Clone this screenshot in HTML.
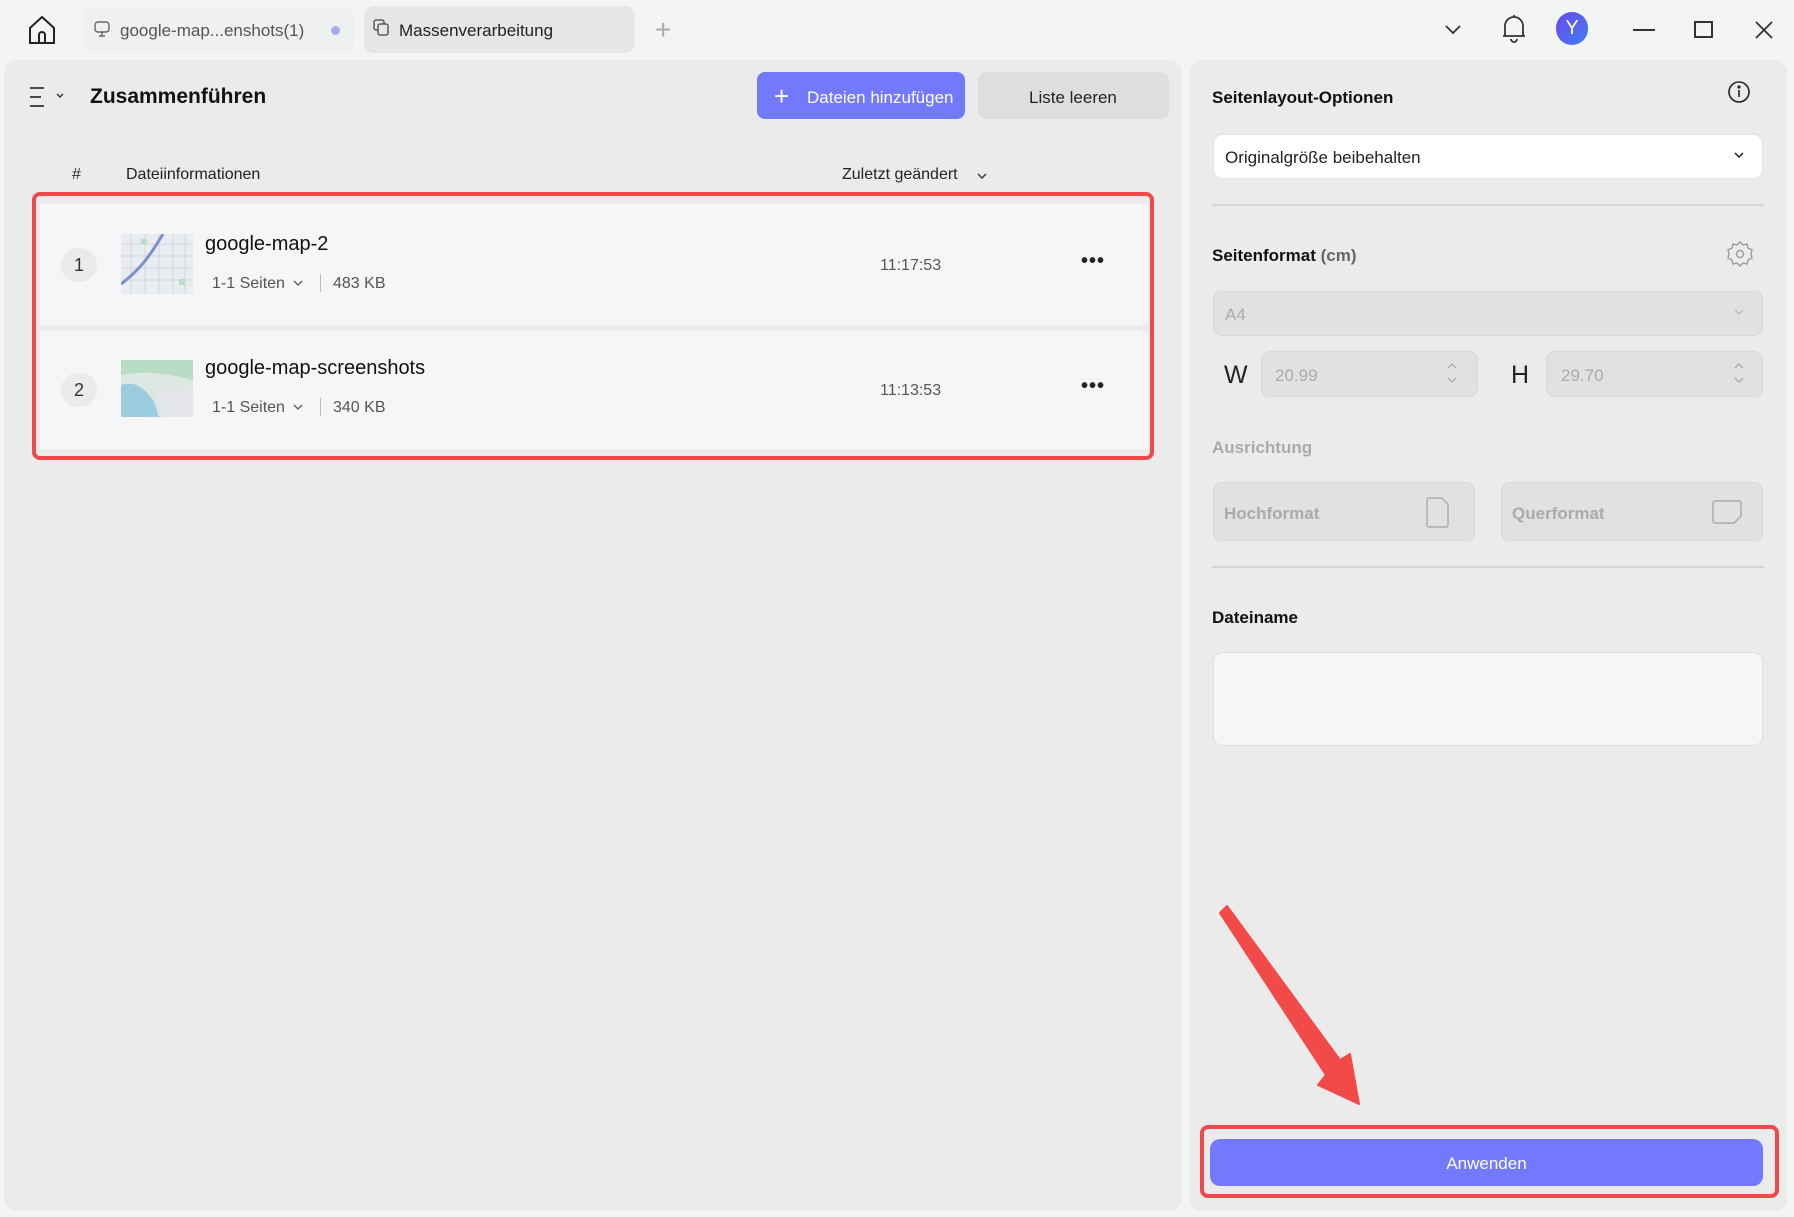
<!DOCTYPE html>
<html><head><meta charset="utf-8"><style>
*{box-sizing:border-box;margin:0;padding:0}
body{width:1794px;height:1217px;background:#f3f4f4;font-family:"Liberation Sans",sans-serif;position:relative;overflow:hidden;color:#1d1d1f}
.a{position:absolute}
.panel{position:absolute;background:#ebebec;border-radius:12px}
.t{position:absolute;white-space:nowrap}
.row{position:absolute;left:40px;width:1108px;background:#f6f6f8}
.badge{position:absolute;width:36px;height:34px;border-radius:17px;background:#ebebed;font-size:18px;text-align:center;line-height:34px;color:#333}
.sel{position:absolute;border-radius:9px}
</style></head><body>
<svg class="a" style="left:26px;top:14px" width="32" height="32" viewBox="0 0 32 32" fill="none" stroke="#222" stroke-width="2"><path d="M4 14 L16 3 L28 14 V29 H4 Z"/><path d="M13 29 V21 a3 3 0 0 1 6 0 V29"/></svg>
<div class="a" style="left:84px;top:7px;width:270px;height:46px;background:#eff0f0;border-radius:10px"></div>
<svg class="a" style="left:94px;top:21px" width="16" height="18" viewBox="0 0 16 18" fill="none" stroke="#666" stroke-width="1.4"><rect x="1" y="1" width="14" height="10" rx="3"/><path d="M8 11 V15 M5 15 H11"/></svg>
<div class="t" style="left:120px;top:21px;font-size:17px;color:#555">google-map...enshots(1)</div>
<div class="a" style="left:331px;top:26px;width:9px;height:9px;border-radius:5px;background:#a9acf5"></div>
<div class="a" style="left:364px;top:6px;width:271px;height:47px;background:#e6e6e8;border-radius:10px"></div>
<svg class="a" style="left:373px;top:19px" width="18" height="18" viewBox="0 0 18 18" fill="none" stroke="#444" stroke-width="1.3"><rect x="1" y="1" width="10" height="10" rx="2"/><rect x="5" y="5" width="10" height="11" rx="2" fill="#e6e6e8"/></svg>
<div class="t" style="left:399px;top:21px;font-size:17px;color:#222">Massenverarbeitung</div>
<div class="t" style="left:655px;top:14px;font-size:28px;color:#aaa;font-weight:300">+</div>
<svg class="a" style="left:1443px;top:22px" width="20" height="14" viewBox="0 0 20 14" fill="none" stroke="#333" stroke-width="1.8"><path d="M3 4 L10 11 L17 4"/></svg>
<svg class="a" style="left:1500px;top:13px" width="28" height="30" viewBox="0 0 28 30" fill="none" stroke="#333" stroke-width="1.8"><path d="M14 2 V4 M5 23 V13 a9 9 0 0 1 18 0 V23 H5 Z M3 23 H25"/><path d="M11 26 a3 3 0 0 0 6 0"/></svg>
<div class="a" style="left:1556px;top:12px;width:32px;height:33px;border-radius:17px;background:linear-gradient(135deg,#6a48f0,#3f7ef0);color:#fff;font-size:20px;text-align:center;line-height:33px">Y</div>
<div class="a" style="left:1633px;top:29px;width:22px;height:2px;background:#333"></div>
<div class="a" style="left:1694px;top:21px;width:19px;height:17px;border:2px solid #333"></div>
<svg class="a" style="left:1754px;top:20px" width="20" height="20" viewBox="0 0 20 20" stroke="#333" stroke-width="1.8"><path d="M2 2 L18 18 M18 2 L2 18"/></svg>

<div class="panel" style="left:4px;top:60px;width:1178px;height:1151px"></div>
<svg class="a" style="left:28px;top:85px" width="40" height="24" viewBox="0 0 40 24" fill="none" stroke="#333" stroke-width="1.8"><path d="M2 3 H16 M2 12 H13 M2 21 H16"/><path d="M29 9 L32 12 L35 9" stroke-width="1.4"/></svg>
<div class="t" style="left:90px;top:85px;font-size:21px;font-weight:bold;color:#111">Zusammenführen</div>
<div class="a" style="left:757px;top:72px;width:208px;height:47px;background:#7279fb;border-radius:8px"></div>
<div class="t" style="left:774px;top:81px;font-size:26px;color:#fff;font-weight:300">+</div>
<div class="t" style="left:807px;top:88px;font-size:17px;color:#fff">Dateien hinzufügen</div>
<div class="a" style="left:978px;top:72px;width:191px;height:47px;background:#dedee0;border-radius:9px"></div>
<div class="t" style="left:1029px;top:88px;font-size:17px;color:#222">Liste leeren</div>
<div class="t" style="left:72px;top:166px;font-size:16px;color:#333">#</div>
<div class="t" style="left:126px;top:166px;font-size:16px;color:#222">Dateiinformationen</div>
<div class="t" style="left:842px;top:166px;font-size:16px;color:#222">Zuletzt geändert</div>
<svg class="a" style="left:977px;top:172px" width="10" height="8" viewBox="0 0 10 8" fill="none" stroke="#333" stroke-width="1.4"><path d="M1 2 L5 6 L9 2"/></svg>

<div class="row" style="top:204px;height:121px"></div>
<div class="row" style="top:331px;height:118px"></div>
<div class="a" style="left:32px;top:192px;width:1122px;height:268px;border:4px solid #ef4a4a;border-radius:8px"></div>

<div class="badge" style="left:61px;top:248px">1</div>
<svg class="a" style="left:121px;top:234px" width="72" height="60" viewBox="0 0 72 60"><rect width="72" height="60" fill="#e9ecf0"/><g stroke="#d2d6dd" stroke-width="1"><path d="M0 10 H72 M0 22 H72 M0 34 H72 M0 46 H72 M10 0 V60 M24 0 V60 M38 0 V60 M52 0 V60 M64 0 V60"/></g><path d="M0 50 C20 35 30 20 42 0" stroke="#7b8fc9" stroke-width="3" fill="none"/><rect x="20" y="5" width="6" height="5" fill="#b9dcc4"/><rect x="58" y="45" width="6" height="6" fill="#b9dcc4"/></svg>
<div class="t" style="left:205px;top:233px;font-size:20px;color:#111">google-map-2</div>
<div class="t" style="left:212px;top:275px;font-size:16px;color:#555">1-1 Seiten</div>
<svg class="a" style="left:293px;top:279px" width="10" height="8" viewBox="0 0 10 8" fill="none" stroke="#555" stroke-width="1.3"><path d="M1 2 L5 6 L9 2"/></svg>
<div class="a" style="left:320px;top:274px;width:1px;height:18px;background:#bbb"></div>
<div class="t" style="left:333px;top:275px;font-size:16px;color:#555">483 KB</div>
<div class="t" style="left:880px;top:257px;font-size:16px;color:#555">11:17:53</div>
<div class="t" style="left:1081px;top:250px;font-size:20px;color:#222;letter-spacing:1px;font-weight:bold">•••</div>

<div class="badge" style="left:61px;top:373px">2</div>
<svg class="a" style="left:121px;top:360px" width="72" height="57" viewBox="0 0 72 57"><rect width="72" height="57" fill="#dfe7e3"/><path d="M0 0 H72 V20 C50 15 30 10 0 15 Z" fill="#b8dcc4"/><path d="M0 25 C15 20 25 30 32 40 C38 50 35 57 40 57 H0 Z" fill="#9cccdf"/><path d="M40 57 C45 50 40 40 34 30 C50 28 60 35 72 30 V57 Z" fill="#e4e6ea"/></svg>
<div class="t" style="left:205px;top:357px;font-size:20px;color:#111">google-map-screenshots</div>
<div class="t" style="left:212px;top:399px;font-size:16px;color:#555">1-1 Seiten</div>
<svg class="a" style="left:293px;top:403px" width="10" height="8" viewBox="0 0 10 8" fill="none" stroke="#555" stroke-width="1.3"><path d="M1 2 L5 6 L9 2"/></svg>
<div class="a" style="left:320px;top:398px;width:1px;height:18px;background:#bbb"></div>
<div class="t" style="left:333px;top:399px;font-size:16px;color:#555">340 KB</div>
<div class="t" style="left:880px;top:382px;font-size:16px;color:#555">11:13:53</div>
<div class="t" style="left:1081px;top:375px;font-size:20px;color:#222;letter-spacing:1px;font-weight:bold">•••</div>

<div class="panel" style="left:1190px;top:60px;width:597px;height:1151px"></div>
<div class="t" style="left:1212px;top:88px;font-size:17px;font-weight:bold;color:#111">Seitenlayout-Optionen</div>
<svg class="a" style="left:1727px;top:80px" width="24" height="24" viewBox="0 0 24 24" fill="none" stroke="#222" stroke-width="1.6"><circle cx="12" cy="12" r="10"/><path d="M12 10 V17"/><circle cx="12" cy="7" r="0.8" fill="#222"/></svg>
<div class="sel" style="left:1213px;top:134px;width:550px;height:45px;background:#fff;border:1px solid #e2e2e4"></div>
<div class="t" style="left:1225px;top:148px;font-size:17px;color:#222">Originalgröße beibehalten</div>
<svg class="a" style="left:1733px;top:151px" width="12" height="9" viewBox="0 0 12 9" fill="none" stroke="#333" stroke-width="1.6"><path d="M2 2 L6 6 L10 2"/></svg>
<div class="a" style="left:1212px;top:204px;width:552px;height:2px;background:#d6d6d8"></div>
<div class="t" style="left:1212px;top:246px;font-size:17px;font-weight:bold;color:#111">Seitenformat <span style="color:#666">(cm)</span></div>
<svg class="a" style="left:1726px;top:240px" width="28" height="28" viewBox="0 0 28 28" fill="none" stroke="#999" stroke-width="1.4"><path d="M14 2 l3 3 4-1 1 4 4 2-1 4 1 4-4 2-1 4-4-1-3 3-3-3-4 1-1-4-4-2 1-4-1-4 4-2 1-4 4 1z"/><circle cx="14" cy="14" r="3.5"/></svg>
<div class="sel" style="left:1213px;top:291px;width:550px;height:45px;background:#e1e1e3;border:1px solid #d8d8da"></div>
<div class="t" style="left:1225px;top:305px;font-size:17px;color:#aaa">A4</div>
<svg class="a" style="left:1733px;top:308px" width="12" height="9" viewBox="0 0 12 9" fill="none" stroke="#bbb" stroke-width="1.4"><path d="M2 2 L6 6 L10 2"/></svg>
<div class="t" style="left:1224px;top:361px;font-size:25px;color:#222">W</div>
<div class="sel" style="left:1261px;top:351px;width:217px;height:46px;background:#e1e1e3;border:1px solid #d8d8da"></div>
<div class="t" style="left:1275px;top:366px;font-size:17px;color:#aaa">20.99</div>
<svg class="a" style="left:1446px;top:361px" width="12" height="24" viewBox="0 0 12 24" fill="none" stroke="#aaa" stroke-width="1.3"><path d="M2 7 L6 3 L10 7 M2 17 L6 21 L10 17"/></svg>
<div class="t" style="left:1511px;top:361px;font-size:25px;color:#222">H</div>
<div class="sel" style="left:1546px;top:351px;width:217px;height:46px;background:#e1e1e3;border:1px solid #d8d8da"></div>
<div class="t" style="left:1561px;top:366px;font-size:17px;color:#aaa">29.70</div>
<svg class="a" style="left:1733px;top:361px" width="12" height="24" viewBox="0 0 12 24" fill="none" stroke="#aaa" stroke-width="1.3"><path d="M2 7 L6 3 L10 7 M2 17 L6 21 L10 17"/></svg>
<div class="t" style="left:1212px;top:438px;font-size:17px;font-weight:bold;color:#aaa">Ausrichtung</div>
<div class="sel" style="left:1213px;top:482px;width:262px;height:59px;background:#e1e1e3;border:1px solid #d8d8da"></div>
<div class="t" style="left:1224px;top:504px;font-size:17px;font-weight:bold;color:#aaa">Hochformat</div>
<svg class="a" style="left:1425px;top:496px" width="26" height="32" viewBox="0 0 26 32" fill="none" stroke="#aaa" stroke-width="1.4"><path d="M4 2 H17 L23 8 V29 a2 2 0 0 1-2 2 H4 a2 2 0 0 1-2-2 V4 a2 2 0 0 1 2-2 Z"/></svg>
<div class="sel" style="left:1501px;top:482px;width:262px;height:59px;background:#e1e1e3;border:1px solid #d8d8da"></div>
<div class="t" style="left:1512px;top:504px;font-size:17px;font-weight:bold;color:#aaa">Querformat</div>
<svg class="a" style="left:1711px;top:499px" width="32" height="26" viewBox="0 0 32 26" fill="none" stroke="#aaa" stroke-width="1.4"><path d="M4 2 H28 a2 2 0 0 1 2 2 V17 L23 24 H4 a2 2 0 0 1-2-2 V4 a2 2 0 0 1 2-2 Z"/></svg>
<div class="a" style="left:1212px;top:566px;width:552px;height:2px;background:#d6d6d8"></div>
<div class="t" style="left:1212px;top:608px;font-size:17px;font-weight:bold;color:#111">Dateiname</div>
<div class="sel" style="left:1213px;top:652px;width:550px;height:94px;background:#f6f6f8;border:1px solid #dedee0"></div>

<svg class="a" style="left:1190px;top:880px" width="300" height="240" viewBox="1190 880 300 240"><path d="M1220 913 L1227 906 L1340 1060 L1350 1054 L1359 1104 L1318 1085 L1326 1075 Z" fill="#f24a48" stroke="#f24a48" stroke-width="2" stroke-linejoin="round"/></svg>
<div class="a" style="left:1200px;top:1125px;width:579px;height:73px;border:4px solid #ef4a4a;border-radius:8px"></div>
<div class="a" style="left:1210px;top:1139px;width:553px;height:47px;background:#7379fd;border-radius:10px"></div>
<div class="t" style="left:1210px;top:1154px;width:553px;text-align:center;font-size:17px;color:#fff">Anwenden</div>
</body></html>
